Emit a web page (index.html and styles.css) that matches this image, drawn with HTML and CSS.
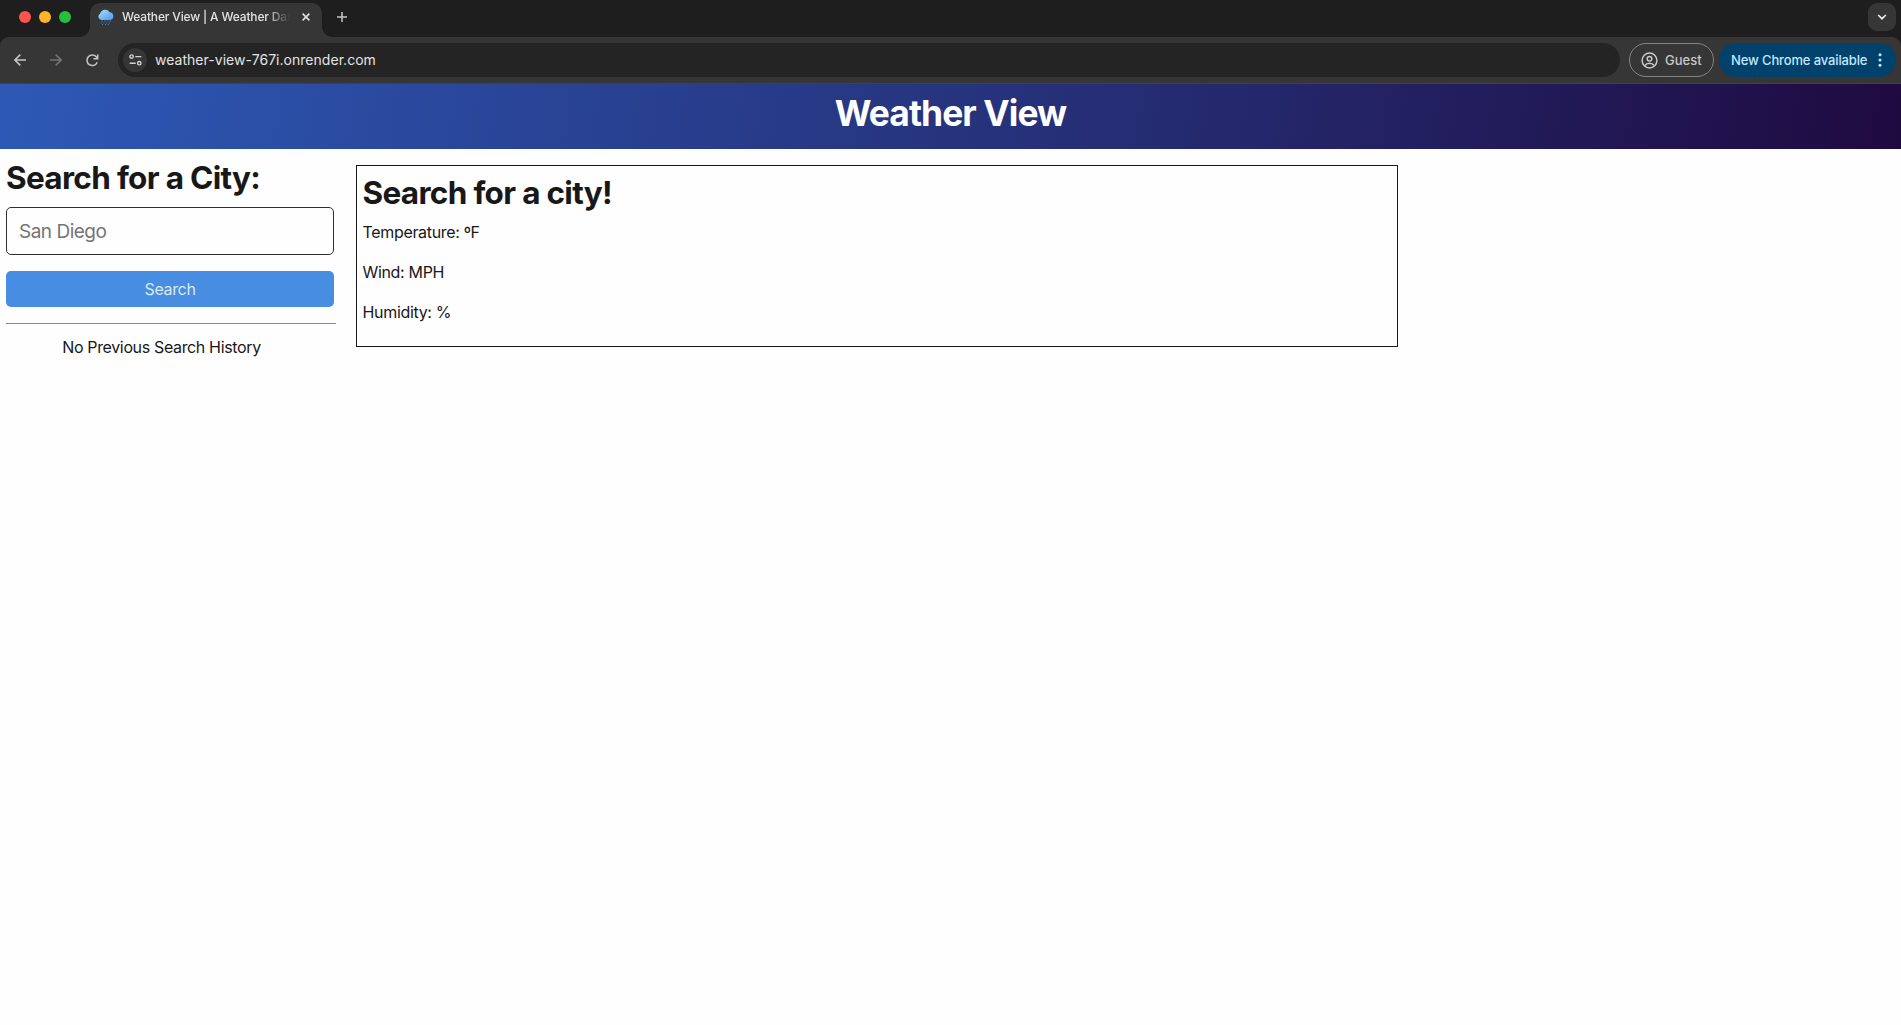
FILE: index.html
```html
<!DOCTYPE html>
<html lang="en">
<head>
<meta charset="utf-8">
<title>Weather View | A Weather Dashboard</title>
<link rel="stylesheet" href="styles.css">
</head>
<body>
<div class="browser">
  <div class="tabstrip">
    <div class="lights"><i class="red"></i><i class="yellow"></i><i class="green"></i></div>
    <div class="tab">
      <svg class="favicon" width="16" height="16" viewBox="0 0 16 16">
        <defs><linearGradient id="cloud" x1="0" y1="0" x2="1" y2="1"><stop offset="0" stop-color="#a9dcfb"/><stop offset="1" stop-color="#489bf0"/></linearGradient></defs>
        <path d="M3.6 11A3.4 3.4 0 0 1 2.2 4.6 5.2 5.2 0 0 1 11.6 3.2 4 4 0 0 1 12.6 11Z" fill="url(#cloud)"/>
        <path d="M3.5 12.2h1M6.5 12.2h1M9.5 12.2h1M12 12.2h1M2.5 14h1M5.3 14h1M8.2 14h1M11 14h1M4 15.5h1M7 15.5h1M9.8 15.5h1" stroke="#3c83c9" stroke-width="1.2"/>
      </svg>
      <span class="tab-title">Weather View | A Weather Das</span>
      <svg class="tab-close" width="8" height="8" viewBox="0 0 8 8"><path d="M.6.6l6.8 6.8M7.4.6L.6 7.4" stroke="#dedede" stroke-width="1.6"/></svg>
    </div>
    <svg class="new-tab" width="10" height="10" viewBox="0 0 10 10"><path d="M5 0v10M0 5h10" stroke="#c8c8c8" stroke-width="1.5"/></svg>
    <div class="tab-search"><svg width="10" height="6" viewBox="0 0 10 6"><path d="M1.2 1L5 4.7 8.8 1" fill="none" stroke="#e8e8e8" stroke-width="1.7"/></svg></div>
  </div>
  <div class="toolbar">
    <svg class="nav back" width="12" height="12" viewBox="0 0 12 12"><path d="M12 6H1M6.3.6L.9 6l5.4 5.4" fill="none" stroke="#c7c7c7" stroke-width="1.5"/></svg>
    <svg class="nav forward" width="12" height="12" viewBox="0 0 12 12"><path d="M0 6h11M5.7.6L11.1 6l-5.4 5.4" fill="none" stroke="#757575" stroke-width="1.5"/></svg>
    <svg class="nav reload" width="13" height="13" viewBox="0 0 13 13"><path d="M11.2 8.3A5.3 5.3 0 1 1 10.6 3.2L11.6 4.4M11.7 .6v4.2H7.5" fill="none" stroke="#c7c7c7" stroke-width="1.5"/></svg>
    <div class="address">
      <div class="site-info"><svg width="13" height="12" viewBox="0 0 13 12" fill="none" stroke="#d2d2d2" stroke-width="1.4"><circle cx="2.6" cy="2.6" r="1.7"/><path d="M6.3 2.6h6M.7 9.2h6"/><circle cx="10.3" cy="9.2" r="1.7"/></svg></div>
      <span class="url">weather-view-767i.onrender.com</span>
    </div>
    <div class="guest">
      <svg width="17" height="17" viewBox="0 0 17 17" fill="none" stroke="#c7c7c7" stroke-width="1.5"><circle cx="8.5" cy="8.5" r="7.4"/><circle cx="8.5" cy="6.7" r="2.3"/><path d="M3.7 13.6c1.1-1.6 2.8-2.4 4.8-2.4s3.7.8 4.8 2.4"/></svg>
      <span>Guest</span>
    </div>
    <div class="update"><span>New Chrome available</span>
      <svg width="4" height="14" viewBox="0 0 4 14" fill="#c2e7ff"><circle cx="2" cy="1.8" r="1.5"/><circle cx="2" cy="7" r="1.5"/><circle cx="2" cy="12.2" r="1.5"/></svg>
    </div>
  </div>
</div>
<header class="banner"><h1>Weather View</h1></header>
<main class="layout">
  <aside class="sidebar">
    <h2 class="side-heading">Search for a City:</h2>
    <input class="city" type="text" placeholder="San Diego">
    <button class="search" type="button"><span>Search</span></button>
    <div class="divider"></div>
    <p class="history"><span>No Previous Search History</span></p>
  </aside>
  <section class="today">
    <h2 class="today-heading"><span>Search for a city!</span></h2>
    <p><span class="temp">Temperature: ºF</span></p>
    <p><span class="wind">Wind: MPH</span></p>
    <p><span class="humidity">Humidity: %</span></p>
  </section>
</main>
</body>
</html>
```
FILE: styles.css
```css
* { box-sizing: border-box; }
body { margin: 0; height: 1025px; overflow: hidden; background: #fefefe; color: #181818; font: 16px/24px Inter, sans-serif; }
h1, h2, p { margin: 0; }
svg { display: block; flex: none; }

.browser { background: #1e1e1e; }
.tabstrip { display: flex; height: 37px; padding: 3px 5px 0 19px; }
.lights { display: flex; gap: 8px; padding-top: 8px; width: 71px; }
.lights i { width: 12px; height: 12px; border-radius: 50%; }
.red { background: #ff544d; }
.yellow { background: #feb429; }
.green { background: #25c138; }
.tab { position: relative; display: flex; width: 232px; height: 34px; padding: 6px 12px 0 8px; border-radius: 10px 10px 0 0; background: #363636; }
.tab::before, .tab::after { content: ""; position: absolute; bottom: 0; width: 10px; height: 10px; }
.tab::before { left: -10px; background: radial-gradient(circle at 0 0, transparent 9.5px, #363636 10px); }
.tab::after { right: -10px; background: radial-gradient(circle at 100% 0, transparent 9.5px, #363636 10px); }
.tab-title { width: 170px; margin-left: 8px; white-space: nowrap; color: #e3e3e3; font-size: 12px; font-weight: 500; line-height: 15px; letter-spacing: -.16px; -webkit-mask-image: linear-gradient(90deg, #000 144px, transparent 168px); }
.tab-close { margin: 4px 0 0 10px; }
.new-tab { margin: 9px 0 0 15px; }
.tab-search { display: flex; align-items: center; justify-content: center; width: 28px; height: 28px; margin-left: auto; border-radius: 9px; background: #363636; }
.toolbar { display: flex; align-items: center; height: 47px; padding: 0 5px 0 14px; border-bottom: 1px solid #424242; border-radius: 9px 9px 0 0; background: #363636; }
.forward { margin-left: 24px; }
.reload { margin-left: 24px; }
.address { display: flex; align-items: center; width: 1502px; height: 34px; margin-left: 19px; padding-left: 5px; border-radius: 17px; background: #242424; }
.site-info { display: flex; align-items: center; justify-content: center; width: 24px; height: 24px; border-radius: 50%; background: #363636; }
.url { margin-left: 8px; color: #e3e3e3; font-size: 14px; letter-spacing: .03px; }
.guest { display: flex; align-items: center; width: 85px; height: 34px; margin-left: 9px; padding-left: 11px; border: 1px solid #858585; border-radius: 17px; color: #c7c7c7; font-size: 13px; font-weight: 500; }
.guest span { margin-left: 7px; }
.update { display: flex; align-items: center; width: 177px; height: 34px; margin-left: 5px; padding-left: 12px; border-radius: 17px; background: #00426b; color: #c2e7ff; font-size: 13px; font-weight: 500; letter-spacing: -.13px; white-space: nowrap; }
.update span { width: 147px; }

.banner { height: 65px; background: linear-gradient(100deg, #2d59b6 0%, #252e75 58%, #1f0a40 100%); color: #fff; text-align: center; }
.banner h1 { padding-top: 8px; font-size: 35.4px; line-height: 44px; font-weight: 700; letter-spacing: -.92px; }
.layout { display: flex; align-items: flex-start; }
.sidebar { flex: none; width: 356px; padding: 9px 20px 0 6px; }
.side-heading, .today-heading { font-size: 31.5px; line-height: 40px; font-weight: 700; white-space: nowrap; letter-spacing: -.68px; }
.city { display: block; width: 328px; height: 48px; margin-top: 9px; padding: 0 12px; border: 1px solid #303030; border-radius: 5px; background: #fefefe; font: 19px Inter, sans-serif; letter-spacing: -.5px; }
.city::placeholder { color: #747474; }
.search { display: block; width: 328px; height: 36px; margin-top: 16px; border: 0; border-radius: 5px; background: #478de1; color: #dbe8ea; font: 16px/24px Inter, sans-serif; letter-spacing: -.35px; }
.divider { width: 330px; height: 1px; margin: 16px 0 11px; background: #8b8b8b; }
.history { width: 311px; text-align: center; letter-spacing: -.35px; }
.today { flex: none; width: 1042px; height: 182px; margin-top: 16px; padding: 7px 5.5px; border: 1px solid #181818; }
.today-heading { margin-bottom: 7px; }
.today p { height: 40px; letter-spacing: -.33px; }
```
